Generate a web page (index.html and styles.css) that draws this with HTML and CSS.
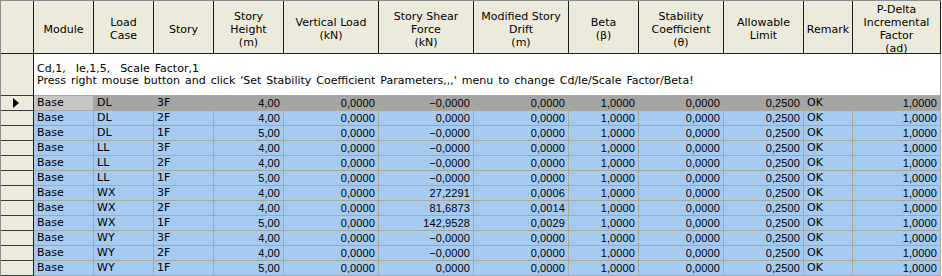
FILE: index.html
```html
<!DOCTYPE html>
<html>
<head>
<meta charset="utf-8">
<link rel="stylesheet" href="styles.css">
</head>
<body>
<div class="grid">
  <div class="hd sel"></div>
  <div class="hd">Module</div>
  <div class="hd">Load<br>Case</div>
  <div class="hd">Story</div>
  <div class="hd">Story<br>Height<br>(m)</div>
  <div class="hd">Vertical Load<br>(kN)</div>
  <div class="hd">Story Shear<br>Force<br>(kN)</div>
  <div class="hd">Modified Story<br>Drift<br>(m)</div>
  <div class="hd">Beta<br>(β)</div>
  <div class="hd">Stability<br>Coefficient<br>(θ)</div>
  <div class="hd">Allowable<br>Limit</div>
  <div class="hd">Remark</div>
  <div class="hd">P-Delta<br>Incremental<br>Factor<br>(ad)</div>

  <div class="rs info-sel"></div>
  <div class="info">Cd,1,&nbsp; Ie,1,5,&nbsp; Scale Factor,1<br>Press right mouse button and click 'Set Stability Coefficient Parameters,,,' menu to change Cd/Ie/Scale Factor/Beta!</div>

  <div class="rs"><span class="arrow"></span></div>
  <div class="c s focus">Base</div><div class="c s">DL</div><div class="c s">3F</div><div class="c s r">4,00</div><div class="c s r">0,0000</div><div class="c s r">−0,0000</div><div class="c s r">0,0000</div><div class="c s r">1,0000</div><div class="c s r">0,0000</div><div class="c s r">0,2500</div><div class="c s">OK</div><div class="c s r">1,0000</div>

  <div class="rs"></div>
  <div class="c">Base</div><div class="c">DL</div><div class="c">2F</div><div class="c r">4,00</div><div class="c r">0,0000</div><div class="c r">0,0000</div><div class="c r">0,0000</div><div class="c r">1,0000</div><div class="c r">0,0000</div><div class="c r">0,2500</div><div class="c">OK</div><div class="c r">1,0000</div>

  <div class="rs"></div>
  <div class="c">Base</div><div class="c">DL</div><div class="c">1F</div><div class="c r">5,00</div><div class="c r">0,0000</div><div class="c r">−0,0000</div><div class="c r">0,0000</div><div class="c r">1,0000</div><div class="c r">0,0000</div><div class="c r">0,2500</div><div class="c">OK</div><div class="c r">1,0000</div>

  <div class="rs"></div>
  <div class="c">Base</div><div class="c">LL</div><div class="c">3F</div><div class="c r">4,00</div><div class="c r">0,0000</div><div class="c r">−0,0000</div><div class="c r">0,0000</div><div class="c r">1,0000</div><div class="c r">0,0000</div><div class="c r">0,2500</div><div class="c">OK</div><div class="c r">1,0000</div>

  <div class="rs"></div>
  <div class="c">Base</div><div class="c">LL</div><div class="c">2F</div><div class="c r">4,00</div><div class="c r">0,0000</div><div class="c r">−0,0000</div><div class="c r">0,0000</div><div class="c r">1,0000</div><div class="c r">0,0000</div><div class="c r">0,2500</div><div class="c">OK</div><div class="c r">1,0000</div>

  <div class="rs"></div>
  <div class="c">Base</div><div class="c">LL</div><div class="c">1F</div><div class="c r">5,00</div><div class="c r">0,0000</div><div class="c r">−0,0000</div><div class="c r">0,0000</div><div class="c r">1,0000</div><div class="c r">0,0000</div><div class="c r">0,2500</div><div class="c">OK</div><div class="c r">1,0000</div>

  <div class="rs"></div>
  <div class="c">Base</div><div class="c">WX</div><div class="c">3F</div><div class="c r">4,00</div><div class="c r">0,0000</div><div class="c r">27,2291</div><div class="c r">0,0006</div><div class="c r">1,0000</div><div class="c r">0,0000</div><div class="c r">0,2500</div><div class="c">OK</div><div class="c r">1,0000</div>

  <div class="rs"></div>
  <div class="c">Base</div><div class="c">WX</div><div class="c">2F</div><div class="c r">4,00</div><div class="c r">0,0000</div><div class="c r">81,6873</div><div class="c r">0,0014</div><div class="c r">1,0000</div><div class="c r">0,0000</div><div class="c r">0,2500</div><div class="c">OK</div><div class="c r">1,0000</div>

  <div class="rs"></div>
  <div class="c">Base</div><div class="c">WX</div><div class="c">1F</div><div class="c r">5,00</div><div class="c r">0,0000</div><div class="c r">142,9528</div><div class="c r">0,0029</div><div class="c r">1,0000</div><div class="c r">0,0000</div><div class="c r">0,2500</div><div class="c">OK</div><div class="c r">1,0000</div>

  <div class="rs"></div>
  <div class="c">Base</div><div class="c">WY</div><div class="c">3F</div><div class="c r">4,00</div><div class="c r">0,0000</div><div class="c r">−0,0000</div><div class="c r">0,0000</div><div class="c r">1,0000</div><div class="c r">0,0000</div><div class="c r">0,2500</div><div class="c">OK</div><div class="c r">1,0000</div>

  <div class="rs"></div>
  <div class="c">Base</div><div class="c">WY</div><div class="c">2F</div><div class="c r">4,00</div><div class="c r">0,0000</div><div class="c r">−0,0000</div><div class="c r">0,0000</div><div class="c r">1,0000</div><div class="c r">0,0000</div><div class="c r">0,2500</div><div class="c">OK</div><div class="c r">1,0000</div>

  <div class="rs"></div>
  <div class="c">Base</div><div class="c">WY</div><div class="c">1F</div><div class="c r">5,00</div><div class="c r">0,0000</div><div class="c r">0,0000</div><div class="c r">0,0000</div><div class="c r">1,0000</div><div class="c r">0,0000</div><div class="c r">0,2500</div><div class="c">OK</div><div class="c r">1,0000</div>
</div>
</body>
</html>
```

FILE: styles.css
```css
html, body {
  margin: 0;
  padding: 0;
  background: #ffffff;
}
body {
  width: 942px;
  height: 276px;
  overflow: hidden;
  font-family: "DejaVu Sans", Verdana, sans-serif;
  font-size: 11px;
  color: #000;
}
.grid {
  display: grid;
  width: 941px;
  box-sizing: border-box;
  border-top: 1px solid #8c8c8c;
  border-left: 1px solid #8c8c8c;
  grid-template-columns: 33px 60px 60px 60px 70px 95px 95px 95px 70px 85px 80px 49px 88px;
  grid-template-rows: 53px 42px repeat(12, 15px);
}
.grid > div {
  box-sizing: border-box;
  overflow: hidden;
  white-space: nowrap;
}
.hd {
  background: #ecebdb;
  border-right: 1px solid #1e1e1e;
  border-bottom: 1px solid #1e1e1e;
  display: flex;
  align-items: center;
  justify-content: center;
  text-align: center;
  line-height: 13px;
  padding-top: 4px;
}
.rs {
  background: #ecebdb;
  border-right: 1px solid #1e1e1e;
  border-bottom: 1px solid #3c3c3c;
  display: flex;
  align-items: center;
  justify-content: center;
}
.arrow {
  width: 0;
  height: 0;
  border-top: 5px solid transparent;
  border-bottom: 5px solid transparent;
  border-left: 6px solid #000;
  margin-left: -2px;
}
.info {
  grid-column: 2 / -1;
  background: #ffffff;
  border-right: 1px solid #a8a8a0;
  border-bottom: 1px solid #a8a8a0;
  display: flex;
  align-items: center;
  line-height: 12px;
  padding: 1px 0 0 3px;
  word-spacing: 1.5px;
}
.c {
  background: #a6caf0;
  border-right: 1px solid #aaa89a;
  border-bottom: 1px solid #aaa89a;
  line-height: 14px;
  padding: 0 3px;
}
.c.r {
  text-align: right;
  font-family: "Liberation Sans", Arial, sans-serif;
  letter-spacing: 0.1px;
}
.c.s {
  background: #a4a4a4;
}
.c.s.focus {
  background: #c6c6c6;
}
```
